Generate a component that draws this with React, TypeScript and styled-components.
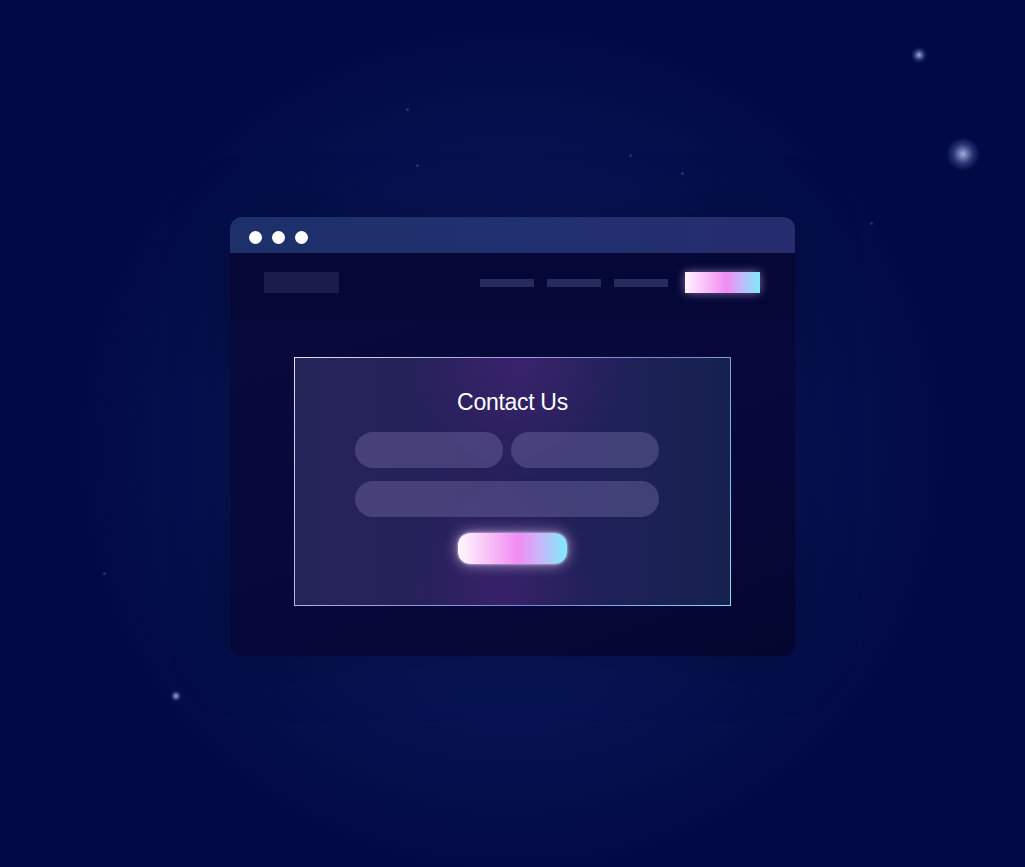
import React from 'react';
import styled, { createGlobalStyle } from 'styled-components';

// --- Global ---
const GlobalStyle = createGlobalStyle`
  html, body {
    margin: 0;
    padding: 0;
    background: #020a45;
  }
  * { box-sizing: border-box; }
`;

// --- Backdrop ---
const Stage = styled.div`
  position: relative;
  width: 1025px;
  height: 867px;
  overflow: hidden;
  display: flex;
  justify-content: center;
  padding-top: 217px;
  background:
    radial-gradient(ellipse 440px 430px at 512px 450px, #0c1a60 0%, #0a1759 45%, #04104d 75%, #020a45 100%);
  font-family: 'Liberation Sans', Arial, sans-serif;
`;

const Star = styled.span<{ $size: number }>`
  position: absolute;
  width: ${p => p.$size}px;
  height: ${p => p.$size}px;
  margin: ${p => -p.$size / 2}px 0 0 ${p => -p.$size / 2}px;
  border-radius: 50%;
  background: radial-gradient(circle, rgba(200, 215, 255, 0.8) 0%, rgba(130, 150, 230, 0.3) 40%, rgba(80, 100, 200, 0) 70%);
`;

const Dust = styled.span`
  position: absolute;
  width: 3px;
  height: 3px;
  border-radius: 50%;
  background: rgba(120, 140, 220, 0.3);
`;

// --- Browser window ---
const Window = styled.div`
  position: relative;
  width: 565px;
  height: 439px;
  border-radius: 12px;
  overflow: hidden;
  display: flex;
  flex-direction: column;
  background: #06083a;
  box-shadow: 0 0 60px rgba(0, 0, 30, 0.35);
`;

const TitleBar = styled.div`
  height: 36px;
  flex-shrink: 0;
  display: flex;
  align-items: center;
  gap: 10px;
  padding: 5px 0 0 19px;
  background: linear-gradient(90deg, #1d3069 0%, #213070 50%, #262c6e 100%);
`;

const Dot = styled.span`
  width: 13px;
  height: 13px;
  border-radius: 50%;
  background: #ffffff;
`;

const NavBar = styled.div`
  height: 67px;
  flex-shrink: 0;
  display: flex;
  align-items: flex-start;
  padding: 19px 35px 0 34px;
  background: #050737;
`;

const LogoBlock = styled.div`
  width: 75px;
  height: 21px;
  background: #1b1c4b;
`;

const NavLinks = styled.div`
  margin-left: auto;
  height: 21px;
  display: flex;
  align-items: center;
  gap: 13px;
`;

const NavLink = styled.span`
  width: 54px;
  height: 8px;
  background: #262a5d;
`;

const NavButton = styled.span`
  width: 75px;
  height: 21px;
  margin-left: 4px;
  background: linear-gradient(90deg, #fdf3fd 0%, #f6a7f4 40%, #f08cf3 55%, #c5b7fa 75%, #7eeafa 100%);
  box-shadow: 0 0 10px rgba(230, 190, 255, 0.55);
`;

const Body = styled.div`
  flex: 1;
  display: flex;
  justify-content: center;
  padding-top: 37px;
  background: linear-gradient(160deg, #080a3c 0%, #06083a 60%, #04062f 100%);
`;

// --- Contact card ---
const Card = styled.div`
  width: 437px;
  height: 249px;
  padding: 1px;
  background: linear-gradient(120deg, #e4e2f6 0%, #a89ddc 35%, #7a86d2 65%, #8fdcef 100%);
`;

const CardInner = styled.div`
  width: 100%;
  height: 100%;
  display: flex;
  flex-direction: column;
  align-items: center;
  padding-top: 30px;
  background:
    radial-gradient(ellipse 110px 120px at 52% 0%, rgba(110, 40, 150, 0.3) 0%, rgba(80, 30, 120, 0) 100%),
    radial-gradient(ellipse 90px 130px at 48% 100%, rgba(100, 35, 140, 0.3) 0%, rgba(80, 30, 120, 0) 100%),
    linear-gradient(90deg, #252459 0%, #25205a 45%, #1e2158 75%, #16214f 100%);
`;

const Title = styled.h2`
  margin: 0 0 16px;
  font-size: 23px;
  font-weight: 400;
  line-height: 28px;
  color: #ffffff;
  letter-spacing: -0.3px;
`;

const Fields = styled.div`
  width: 304px;
  margin-right: 11px;
  display: grid;
  grid-template-columns: 148px 148px;
  gap: 13px 8px;
`;

const Field = styled.div<{ $wide?: boolean }>`
  height: 36px;
  border-radius: 18px;
  background: rgba(110, 104, 160, 0.45);
  grid-column: ${p => (p.$wide ? '1 / span 2' : 'auto')};
`;

const SendButton = styled.div`
  margin-top: 16px;
  width: 109px;
  height: 31px;
  border-radius: 12px;
  background: linear-gradient(90deg, #fff8fe 0%, #f6b3f6 35%, #f28bf4 55%, #c9b6fa 75%, #7decfb 100%);
  box-shadow: 0 0 14px rgba(240, 210, 255, 0.7), 0 0 3px rgba(255, 255, 255, 0.8);
`;

export default function App() {
  return (
    <>
      <GlobalStyle />
      <Stage>
        <Star $size={16} style={{ left: 919, top: 55 }} />
        <Star $size={34} style={{ left: 963, top: 154 }} />
        <Star $size={12} style={{ left: 176, top: 696 }} />
        <Dust style={{ left: 406, top: 108 }} />
        <Dust style={{ left: 629, top: 154 }} />
        <Dust style={{ left: 681, top: 172 }} />
        <Dust style={{ left: 416, top: 164 }} />
        <Dust style={{ left: 103, top: 572 }} />
        <Dust style={{ left: 870, top: 222 }} />

        <Window>
          <TitleBar>
            <Dot />
            <Dot />
            <Dot />
          </TitleBar>
          <NavBar>
            <LogoBlock />
            <NavLinks>
              <NavLink />
              <NavLink />
              <NavLink />
              <NavButton />
            </NavLinks>
          </NavBar>
          <Body>
            <Card>
              <CardInner>
                <Title>Contact Us</Title>
                <Fields>
                  <Field />
                  <Field />
                  <Field $wide />
                </Fields>
                <SendButton />
              </CardInner>
            </Card>
          </Body>
        </Window>
      </Stage>
    </>
  );
}
